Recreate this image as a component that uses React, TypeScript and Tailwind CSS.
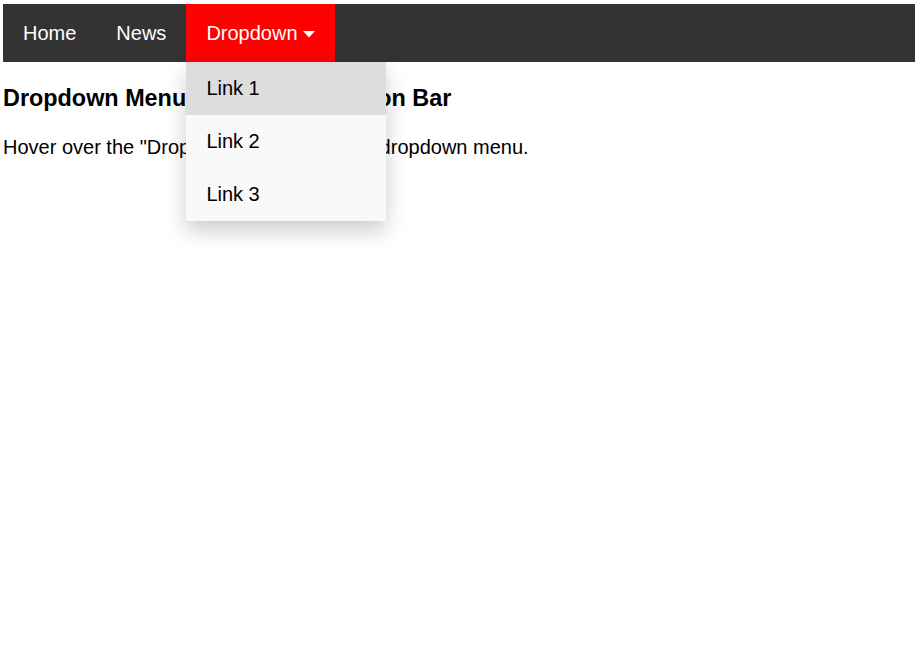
import React from "react";

export default function App() {
  return (
    <div
      className="min-h-[665px] bg-white pl-[3px] pt-[4px] text-black"
      style={{ fontFamily: '"Liberation Sans", Arial, sans-serif' }}
    >
      <nav className="flex w-[912px] bg-[#333333] text-[20px] leading-[23px]">
        <a className="block px-[20px] py-[17.5px] text-white">Home</a>
        <a className="block px-[20px] py-[17.5px] text-white">News</a>
        <div className="relative">
          <div className="flex items-center bg-[#ff0000] px-[20px] py-[17.5px] text-white">
            <span>Dropdown</span>
            <svg
              className="ml-[5px] mt-[2px]"
              width="12"
              height="7"
              viewBox="0 0 12 7"
            >
              <path d="M0 0 H12 L6 6.5 Z" fill="#ffffff" />
            </svg>
          </div>
          <div className="absolute left-0 top-full z-10 w-[200px] bg-[#f9f9f9] shadow-[0_10px_20px_0_rgba(0,0,0,0.2)]">
            <a className="block bg-[#dddddd] px-[20px] py-[15px] text-black">Link 1</a>
            <a className="block px-[20px] py-[15px] text-black">Link 2</a>
            <a className="block px-[20px] py-[15px] text-black">Link 3</a>
          </div>
        </div>
      </nav>
      <h3 className="mt-[23px] text-[23.4px] font-bold leading-[27px]">
        Dropdown Menu inside a Navigation Bar
      </h3>
      <p className="mt-[24.4px] text-[20px] leading-[23px]">
        Hover over the "Dropdown" link to see the dropdown menu.
      </p>
    </div>
  );
}
